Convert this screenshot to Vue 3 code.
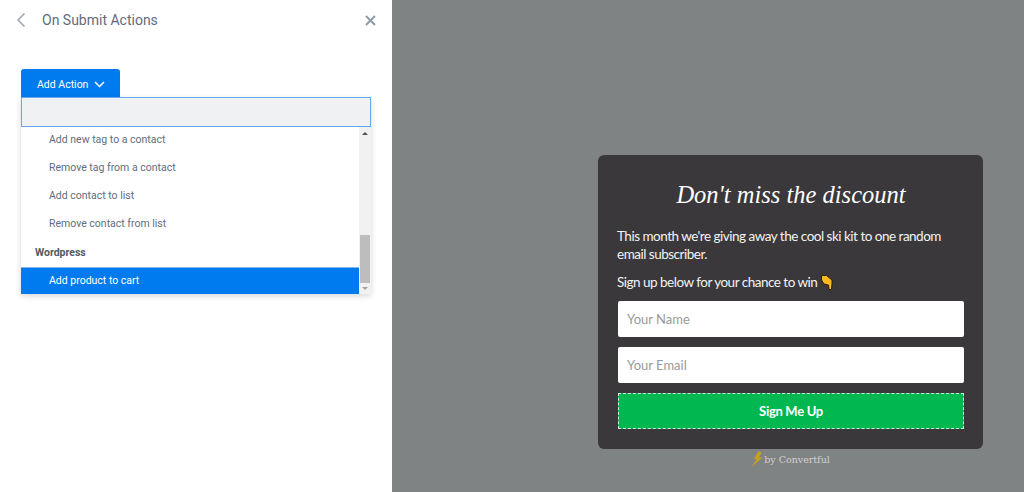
<script setup>
const items = ['Add new tag to a contact', 'Remove tag from a contact', 'Add contact to list', 'Remove contact from list']
</script>

<template>
  <div class="app">
    <aside class="side">
      <header class="head">
        <svg class="back" width="10" height="16" viewBox="0 0 10 16"><path d="M8.500 1.500 2 8l6.500 6.500" fill="none" stroke="#a2a9b1" stroke-width="1.600" /></svg>
        <span class="title">On Submit Actions</span>
        <svg class="close" width="11" height="11" viewBox="0 0 11 11"><path d="M1 1l9 9M10 1l-9 9" fill="none" stroke="#8f9aa6" stroke-width="1.900" /></svg>
      </header>
      <div class="picker">
        <button class="add">Add Action
          <svg width="11" height="7" viewBox="0 0 11 7"><path d="M1 1l4.500 4.500L10 1" fill="none" stroke="#fff" stroke-width="1.500" /></svg>
        </button>
        <div class="drop">
          <div class="search"></div>
          <div class="listwrap">
            <ul class="list">
              <li v-for="i in items" :key="i" class="item">{{ i }}</li>
              <li class="group">Wordpress</li>
              <li class="item on">Add product to cart</li>
            </ul>
            <div class="bar">
              <span class="up"></span>
              <span class="thumb"></span>
              <span class="down"></span>
            </div>
          </div>
        </div>
      </div>
    </aside>

    <main class="stage">
      <div class="popup">
        <section class="card">
          <h1 class="hand">Don't miss the discount</h1>
          <p class="copy first">This month we're giving away the cool ski kit to one random email subscriber.</p>
          <p class="copy second">Sign up below for your chance to win
            <svg class="hand-ico" width="12" height="15" viewBox="0 0 12 15"><path d="M.5.500h5L11 5v3.500L10.500 14.500H8L7.500 10 3 9 .5 5z" fill="#fbb81f" stroke="#2a2000" stroke-width="1" stroke-linejoin="round" /></svg>
          </p>
          <div class="field">Your Name</div>
          <div class="field">Your Email</div>
          <button class="cta">Sign Me Up</button>
        </section>
        <div class="brand">
          <svg width="12" height="16" viewBox="0 0 12 16"><path d="M7.500 0 3 8h3L0.500 16 11.500 6.500H8L10.500 1.500z" fill="#c9a01e" /></svg>
          <span>by Convertful</span>
        </div>
      </div>
    </main>
  </div>
</template>

<style>
html, body { margin: 0; height: 100%; }
#app { height: 100%; }
</style>

<style scoped>
* { box-sizing: border-box; }
.app { display: flex; height: 492px; overflow: hidden; font-family: Roboto, sans-serif; }
.side { width: 392px; background: #fff; padding: 0 21px; flex: none; }
.head { display: flex; align-items: center; height: 40px; margin-left: -5px; }
.back { margin-right: 16px; }
.title { font-size: 14px; color: #5f6d7b; flex: 1; }
.close { margin-right: -5px; }
.picker { margin-top: 29px; width: 350px; }
.add { display: flex; align-items: center; gap: 6px; width: 99px; height: 28px; padding: 2px 0 0 16px; border: 0; border-radius: 3px 3px 0 0; background: #007bef; color: #fff; font: 400 10.500px Roboto, sans-serif; }
.drop { box-shadow: 0 2px 6px rgba(0, 0, 0, .16); }
.search { height: 30px; background: #f0f1f3; border: 1px solid #62a9f5; }
.listwrap { display: flex; height: 167px; background: #fff; }
.list { flex: 1; list-style: none; margin: 0; padding: 0; }
.item { height: 28px; padding-left: 28px; line-height: 25px; font-size: 10.500px; color: #5f6d7b; }
.group { height: 29px; padding-left: 14px; line-height: 27px; font-size: 10.500px; font-weight: 700; color: #4f5b66; }
.item.on { background: #007bef; color: #fff; margin-top: -1px; border-top: 1px solid #7db8f5; height: 27px; line-height: 25px; }
.bar { width: 12px; background: #f1f1f1; display: flex; flex-direction: column; align-items: center; }
.up { margin-top: 5px; border: 3px solid transparent; border-top: 0; border-bottom: 3px solid #505050; }
.thumb { width: 10px; height: 48px; background: #bdbdbd; margin-top: auto; }
.down { margin: 4px 0 4px; border: 3px solid transparent; border-bottom: 0; border-top: 3px solid #a3a3a3; }
.stage { flex: 1; background: #808383; display: flex; justify-content: flex-end; padding: 155px 41px 0 0; }
.popup { width: 385px; display: flex; flex-direction: column; align-items: center; }
.card { width: 100%; height: 294px; padding: 0 19px 0 20px; background: #3a383b; border-radius: 6px; font-family: Lato, sans-serif; }
.hand { margin: 24px 0 0; height: 32px; text-align: center; color: #fff; font: italic 400 24.500px/32px "Liberation Serif", serif; }
.copy { margin: 0 0 0 -1px; font-size: 13.500px; letter-spacing: -.5px; line-height: 18px; color: #f3f3f3; }
.first { margin-top: 16px; width: 340px; }
.second { margin-top: 10px; display: flex; align-items: center; gap: 4px; }
.field { height: 36px; margin-top: 10px; padding-left: 9px; background: #fff; border-radius: 2px; color: #9a9a9a; font-size: 13px; line-height: 36px; }
.cta { display: block; width: 100%; height: 36px; margin-top: 10px; background: #00b84f; border: 1px dashed #d8e8e0; color: #fff; font: 700 13px Lato, sans-serif; letter-spacing: -.3px; }
.brand { display: flex; align-items: center; gap: 1px; margin-top: 2px; color: #d0d0d0; font: 400 9.500px "DejaVu Serif", serif; }
</style>
